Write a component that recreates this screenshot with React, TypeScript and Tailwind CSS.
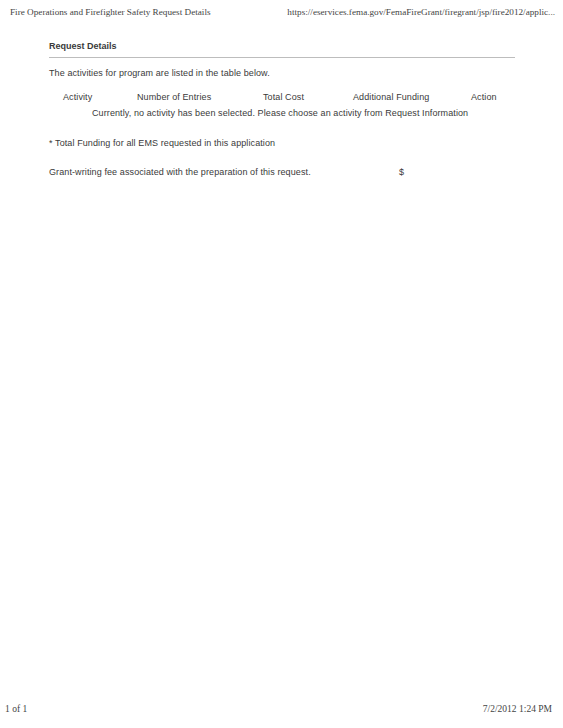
import React from "react";

export default function App() {
  return (
    <div className="w-[563px] h-[728px] bg-white flex flex-col justify-between overflow-hidden">
      <div>
        <div className="flex justify-between items-start pt-[6px] pl-[10px] pr-[8px] text-[9.2px] leading-[12px] text-[#444]" style={{ fontFamily: '"Liberation Serif", serif' }}>
          <span>Fire Operations and Firefighter Safety Request Details</span>
          <span>https://eservices.fema.gov/FemaFireGrant/firegrant/jsp/fire2012/applic...</span>
        </div>
        <div className="pl-[49px] pr-[48px] text-[9px] tracking-[0.1px] leading-[11px] text-[#3a3a3a]" style={{ fontFamily: '"Liberation Sans", Arial, sans-serif' }}>
          <div className="mt-[23px] font-bold tracking-normal">Request Details</div>
          <div className="mt-[5px] h-px bg-[#bdbdbd]" />
          <div className="mt-[10px]">The activities for program are listed in the table below.</div>
          <div className="mt-[13px] flex pl-[14px]">
            <span className="w-[74px]">Activity</span>
            <span className="w-[126px]">Number of Entries</span>
            <span className="w-[90px]">Total Cost</span>
            <span className="w-[118px]">Additional Funding</span>
            <span>Action</span>
          </div>
          <div className="mt-[5px] pl-[43px] whitespace-nowrap">Currently, no activity has been selected. Please choose an activity from Request Information</div>
          <div className="mt-[19px]">* Total Funding for all EMS requested in this application</div>
          <div className="mt-[18px] flex">
            <span className="w-[350px]">Grant-writing fee associated with the preparation of this request.</span>
            <span>$</span>
          </div>
        </div>
      </div>
      <div className="flex justify-between pb-[13px] pl-[5px] pr-[11px] text-[9.5px] leading-[12px] text-[#444]" style={{ fontFamily: '"Liberation Serif", serif' }}>
        <span>1 of 1</span>
        <span>7/2/2012 1:24 PM</span>
      </div>
    </div>
  );
}
